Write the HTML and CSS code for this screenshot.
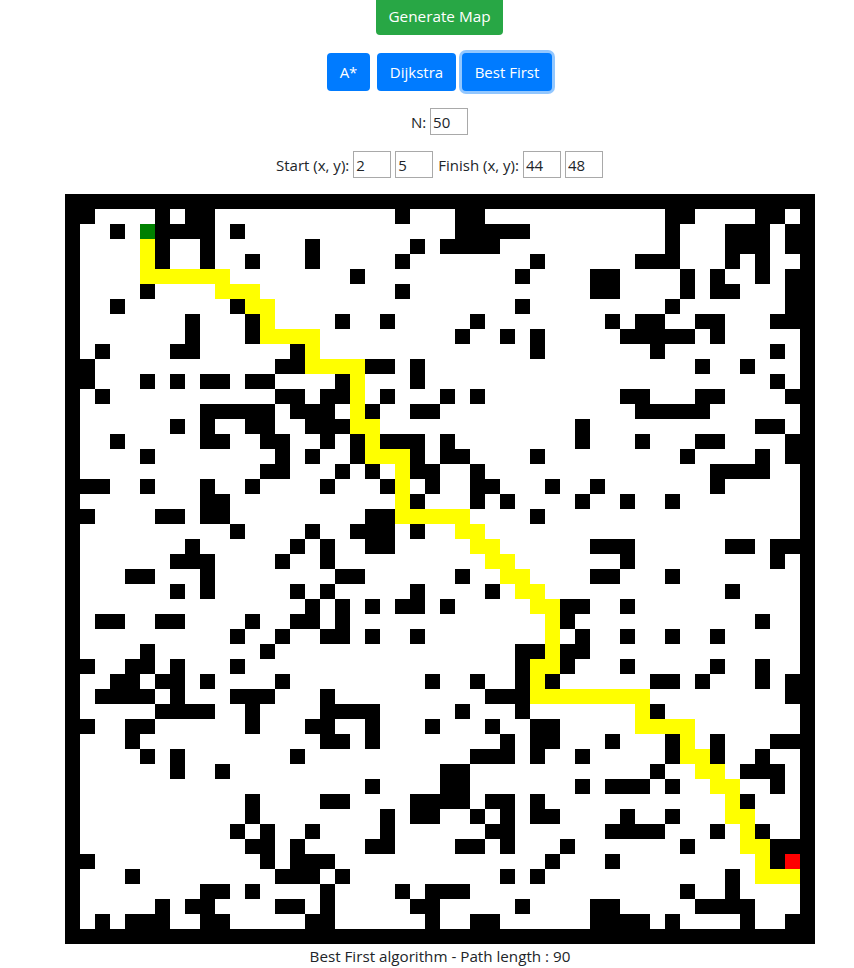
FILE: index.html
```html
<!DOCTYPE html>
<html lang="en">
  <head>
    <meta charset="UTF-8" />
    <meta name="viewport" content="width=device-width, initial-scale=1.0" />
    <title>Path Finding</title>
    <link rel="stylesheet" href="styles.css">
  </head>

  <body>
    <div id="app">
      <div class="row row-generate">
        <button class="btn btn-green btn-generate">Generate Map</button>
      </div>
      <div class="row row-algos">
        <button class="btn btn-blue btn-astar">A*</button>
        <button class="btn btn-blue btn-dijkstra">Dijkstra</button>
        <button class="btn btn-blue btn-best btn-focus">Best First</button>
      </div>
      <div class="row row-size">
        <label for="size">N:</label>
        <input id="size" type="text" value="50" />
      </div>
      <div class="row row-points">
        <label for="startX">Start (x, y):</label>
        <input id="startX" type="text" value="2" />
        <input id="startY" type="text" value="5" />
        <label for="finishX" class="label-finish">Finish (x, y):</label>
        <input id="finishX" type="text" value="44" />
        <input id="finishY" type="text" value="48" />
      </div>
      <div id="map"></div>
      <div class="result">Best First algorithm - Path length : 90</div>
    </div>

    <script>
      const N = 50;
      const start = [2, 5];
      const finish = [44, 48];

      // wall columns for each row
      const walls = [
        '0-49',
        '0-1 6 8-9 22 26-27 40-41 46-47 49',
        '0 3 6-9 11 26-30 40 44-46 48-49',
        '0 6 9 16 23 25-28 40 44-46 48-49',
        '0 6 9 12 16 22 31 38-40 44 46 49',
        '0 19 30 35-36 41 43 46 48-49',
        '0 5 22 35-36 41 43-44 48-49',
        '0 3 11 30 40 48-49',
        '0 8 12 18 21 27 36 38-39 42-43 47-49',
        '0 8 12 26 29 31 37-41 43 49',
        '0 2 7-8 15 31 39 47 49',
        '0-1 14-15 20-21 23 42 45 49',
        '0-1 5 7 9-10 12-13 18 23 47 49',
        '0 2 14-15 17-18 21 25 27 37-38 42-43 48-49',
        '0 9-13 15-17 20 23-24 38-42 49',
        '0 7 9 12-13 16-18 34 46-47 49',
        '0 3 9-10 13-14 17 19 21-23 25 34 38 42-43 48-49',
        '0 5 14 16 19 23 25-26 31 41 46 48-49',
        '0 13-14 18 20 23-24 27 43-46 49',
        '0-2 5 9 12 17 21 24 27-28 32 35 43 49',
        '0 9-10 23 27 29 34 37 40 49',
        '0-1 6-7 9-10 20-21 31 49',
        '0 11 16 19-21 23 49',
        '0 8 15 17 20-21 35-37 44-45 47-49',
        '0 7-9 14 17 37 47 49',
        '0 4-5 9 18-19 26 35-36 40 49',
        '0 7 9 15 17 23 28 44 49',
        '0 16 18 20 22-23 25 33-34 37 49',
        '0 2-3 6-7 12 15-16 18 33 46 49',
        '0 11 14 17-18 20 23 34 37 40 43 49',
        '0 5 13 30-31 33-34 49',
        '0-1 4-5 7 11 30 33 37 43 46 49',
        '0 3-4 6-7 9 14 24 27 30 32 39-40 42 46 48-49',
        '0 2-5 7 11-13 17 28-30 48-49',
        '0 6-9 12 17-20 26 30 39 49',
        '0-1 4-5 12 16-17 20 24 28 31-32 49',
        '0 4 17-18 20 29 31-32 36 40 43 47-49',
        '0 5 7 15 27-29 31 34 40 43 46 49',
        '0 7 10 25-26 39 45-47 49',
        '0 20 25-26 34 36-38 40 47 49',
        '0 12 17-18 23-26 28-29 31 45 49',
        '0 12 21 23-24 27 29 31-32 37 40 49',
        '0 11 13 16 21 28-29 36-39 43 46 49',
        '0 12-13 15 20-21 26-27 29 33 41 47-49',
        '0-1 13 15-17 32 36 47 49',
        '0 4 14-16 18 29 31 44 49',
        '0 9-10 12 17 22 24-26 41 44 49',
        '0 6 8-9 14-15 17 23-24 30 35-36 42-45 49',
        '0 2 4-6 9-10 16-17 24 27-28 35-38 40 45 48-49',
        '0-49',
      ];

      // path columns, keyed by row
      const path = {
        3: '5', 4: '5', 5: '5-10', 6: '10-12', 7: '12-13', 8: '13', 9: '13-16',
        10: '16', 11: '16-19', 12: '19', 13: '19', 14: '19', 15: '19-20',
        16: '20', 17: '20-22', 18: '22', 19: '22', 20: '22', 21: '22-26',
        22: '26-27', 23: '27-28', 24: '28-29', 25: '29-30', 26: '30-31',
        27: '31-32', 28: '32', 29: '32', 30: '32', 31: '31-32', 32: '31',
        33: '31-38', 34: '38', 35: '38-41', 36: '41', 37: '41-42', 38: '42-43',
        39: '43-44', 40: '44', 41: '44-45', 42: '45', 43: '45-46', 44: '46',
        45: '46-48',
      };

      function parseColumns(text) {
        const columns = new Set();
        text.split(' ').forEach((part) => {
          const [from, to] = part.split('-').map(Number);
          for (let c = from; c <= (to === undefined ? from : to); c++) {
            columns.add(c);
          }
        });
        return columns;
      }

      function drawMap() {
        const map = document.getElementById('map');
        for (let r = 0; r < N; r++) {
          const wallCols = parseColumns(walls[r]);
          const pathCols = path[r] ? parseColumns(path[r]) : new Set();
          for (let c = 0; c < N; c++) {
            const cell = document.createElement('div');
            cell.className = 'cell';
            if (wallCols.has(c)) cell.classList.add('wall');
            if (pathCols.has(c)) cell.classList.add('path');
            if (r === start[0] && c === start[1]) cell.classList.add('start');
            if (r === finish[0] && c === finish[1]) cell.classList.add('finish');
            map.appendChild(cell);
          }
        }
      }

      drawMap();
    </script>
  </body>
</html>
```

FILE: styles.css
```css
body {
  font-family: "Open Sans", "Noto Sans", Arial, sans-serif;
  font-size: 15px;
  line-height: 24px;
  margin: 0;
  color: #212529;
  background-color: #fff;
}

#app {
  box-sizing: border-box;
  width: 854px;
  padding-left: 26px;
  margin-top: -3px;
}

.row {
  display: flex;
  justify-content: center;
  align-items: center;
  padding-right: 1px;
}

.row-generate {
  margin-bottom: 18px;
}

.row-algos {
  gap: 6px;
  margin-bottom: 17px;
}

.row-size,
.row-points {
  gap: 4px;
  margin-bottom: 16px;
}

.btn {
  height: 38px;
  padding: 0;
  border: 1px solid transparent;
  border-radius: 4px;
  color: #fff;
  font-family: inherit;
  font-size: 15px;
}

.btn-green {
  background-color: #28a745;
}

.btn-blue {
  background-color: #007bff;
}

.btn-focus {
  box-shadow: 0 0 0 3px rgba(38, 143, 255, 0.5);
}

.btn-generate {
  width: 127px;
  font-size: 15.3px;
}

.btn-astar {
  width: 43px;
  margin-right: 1px;
}

.btn-dijkstra {
  width: 79px;
}

.btn-best {
  width: 90px;
}

input {
  box-sizing: border-box;
  width: 38px;
  height: 27px;
  padding: 1px 2px;
  border: 1px solid #a9a9a9;
  color: #212529;
  font-family: inherit;
  font-size: 15px;
}

.label-finish {
  margin-left: 1px;
}

#map {
  display: grid;
  grid-template-columns: repeat(50, 15px);
  grid-auto-rows: 15px;
  width: 750px;
  margin: 0 auto;
}

.cell {
  background-color: #fff;
}

.wall {
  background-color: #000;
}

.path {
  background-color: #ff0;
}

.start {
  background-color: #008000;
}

.finish {
  background-color: #f00;
}

.result {
  font-size: 15.2px;
  text-align: center;
}
```
